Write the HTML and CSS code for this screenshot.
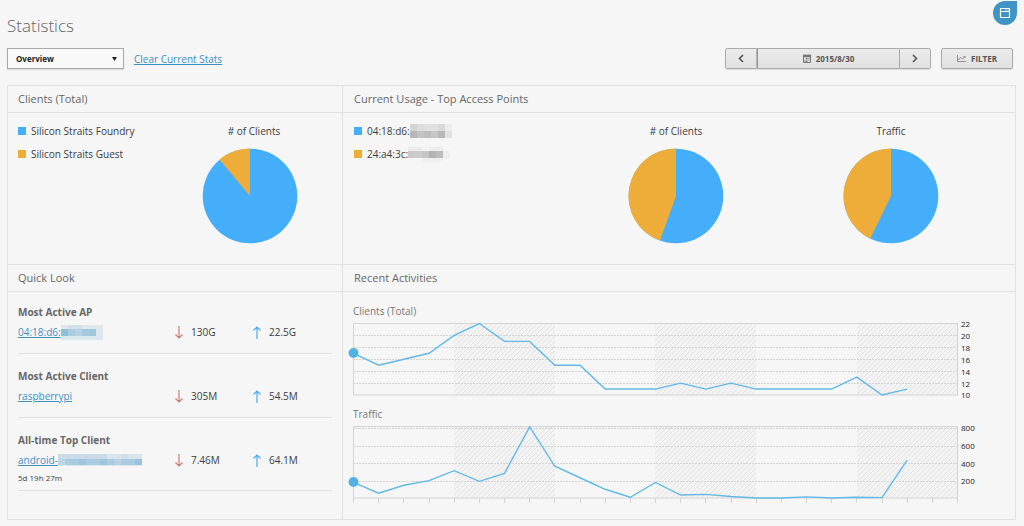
FILE: index.html
```html
<!DOCTYPE html>
<html lang="en">
<head>
<meta charset="utf-8">
<meta name="viewport" content="width=device-width, initial-scale=1">
<title>Statistics</title>
<link rel="stylesheet" href="styles.css">
</head>
<body>
<button class="corner-button" type="button" aria-label="Open window">
  <svg width="12" height="12" viewBox="0 0 12 12" fill="none" stroke="#fff" stroke-width="1.200"><rect x="1.500" y="1.500" width="9" height="9" rx=".5"/><path d="M1.500 4.500H10.500M6.500 3h1M8.500 3h1"/></svg>
</button>
<main class="page">
  <h1 class="title">Statistics</h1>
  <div class="toolbar">
    <div class="picker">
      <select class="picker-select" aria-label="View"><option>Overview</option></select>
      <svg class="picker-caret" width="5" height="4" viewBox="0 0 5 4"><path d="M0 0h5L2.500 4z" fill="#222"/></svg>
    </div>
    <a class="clear-link" href="#">Clear Current Stats</a>
    <div class="date-group">
      <button class="btn btn-step" type="button" aria-label="Previous day"><svg width="6" height="9" viewBox="0 0 6 9"><path d="M5 1L1.500 4.500L5 8" fill="none" stroke="#555" stroke-width="1.600"/></svg></button>
      <button class="btn btn-date" type="button"><svg width="8" height="9" viewBox="0 0 8 9"><path d="M.5 1.500h7v7h-7z" fill="none" stroke="#777"/><path d="M0 1h8v2H0zM2 0v1M6 0v1" fill="#777" stroke="#777" stroke-width=".5"/><path d="M3 4.500h3.500M1.500 6h5M1.500 7.500h3.500" stroke="#777" stroke-dasharray="1 .5"/></svg>2015/8/30</button>
      <button class="btn btn-step" type="button" aria-label="Next day"><svg width="6" height="9" viewBox="0 0 6 9"><path d="M1 1L4.500 4.500L1 8" fill="none" stroke="#555" stroke-width="1.600"/></svg></button>
    </div>
    <button class="btn btn-filter" type="button"><svg width="9" height="7" viewBox="0 0 9 7"><path d="M.5 0v6.500H9M1.500 5L3.500 2.500L5.500 4L8 1.500M6.500 1.500H8V3" fill="none" stroke="#777" stroke-width=".8"/></svg>FILTER</button>
  </div>

  <div class="board">
    <section class="panel">
      <h2 class="panel-title">Clients (Total)</h2>
      <div class="usage">
        <ul class="legend">
          <li><span class="swatch blue"></span>Silicon Straits Foundry</li>
          <li><span class="swatch orange"></span>Silicon Straits Guest</li>
        </ul>
        <figure class="pie pie-single"><figcaption>#&nbsp;of Clients</figcaption>
          <svg width="96" height="96" viewBox="-48 -48 96 96"><circle r="47.300" fill="#44aefa"/><path d="M0 0V-47.600A47.600 47.600 0 0 0 -30.600 -36.500z" fill="#eead39"/></svg></figure>
      </div>
    </section>

    <section class="panel panel-main">
      <h2 class="panel-title">Current Usage - Top Access Points</h2>
      <div class="usage">
        <ul class="legend">
          <li><span class="swatch blue"></span>04:18:d6:<svg class="masked" width="42" height="15" shape-rendering="crispEdges"><path d="M0 0h7v7H0z" fill="#d5d5d5"/><path d="M7 0h7v7H7z" fill="#dcdcdc"/><path d="M14 0h14v7H14z" fill="#e0e1e0"/><path d="M28 0h7v7h-7z" fill="#dadada"/><path d="M35 0h7v7h-7z" fill="#eeeeee"/><path d="M0 7h7v7H0z" fill="#b9b7b8"/><path d="M7 7h7v7H7z" fill="#c4c4c4"/><path d="M14 7h7v7h-7z" fill="#bebebe"/><path d="M21 7h7v7h-7z" fill="#c7c7c7"/><path d="M28 7h7v7h-7z" fill="#b9b9ba"/><path d="M35 7h7v7h-7z" fill="#e2e2e3"/></svg></li>
          <li><span class="swatch orange"></span>24:a4:3c:<svg class="masked" width="42" height="15" shape-rendering="crispEdges"><path d="M0 0h14v4H0z" fill="#ececec"/><path d="M14 0h7v4h-7z" fill="#f3f3f3"/><path d="M21 0h14v4H21z" fill="#ededed"/><path d="M0 4h7v7H0z" fill="#c9c9c9"/><path d="M7 4h7v7H7z" fill="#cccccc"/><path d="M14 4h7v7h-7z" fill="#c5c5c5"/><path d="M21 4h7v7h-7z" fill="#b4b4b4"/><path d="M28 4h7v7h-7z" fill="#bdbdbd"/><path d="M35 4h7v7h-7z" fill="#eeeeee"/><path d="M14 11h21v4H14z" fill="#f0f0f0"/></svg></li>
        </ul>
        <figure class="pie"><figcaption>#&nbsp;of Clients</figcaption>
          <svg width="96" height="96" viewBox="-48 -48 96 96"><circle r="47.300" fill="#44aefa"/><path d="M0 0V-47.600A47.600 47.600 0 0 0 -16 44.800z" fill="#eead39"/></svg></figure>
        <figure class="pie pie-wide"><figcaption>Traffic</figcaption>
          <svg width="96" height="96" viewBox="-48 -48 96 96"><circle r="47.300" fill="#44aefa"/><path d="M0 0V-47.600A47.600 47.600 0 0 0 -20.800 42.800z" fill="#eead39"/></svg></figure>
      </div>
    </section>

    <section class="panel">
      <h2 class="panel-title">Quick Look</h2>
      <div class="looks">
        <article class="look">
          <h3>Most Active AP</h3>
          <div class="look-row">
            <div class="who"><a href="#">04:18:d6:</a><svg class="masked" width="42" height="15" shape-rendering="crispEdges"><path d="M0 0h42v4H0z" fill="#dfe7ec"/><path d="M7 0h14v4H7z" fill="#d3e1e9"/><path d="M0 4h7v7H0z" fill="#91bfd9"/><path d="M7 4h7v7H7z" fill="#a9cce0"/><path d="M14 4h7v7h-7z" fill="#b5d2e2"/><path d="M21 4h7v7h-7z" fill="#a5cadf"/><path d="M28 4h7v7h-7z" fill="#a0c7df"/><path d="M35 4h7v7h-7z" fill="#dce7ee"/><path d="M0 11h42v4H0z" fill="#dce8ef"/></svg></div>
            <span class="stat"><svg width="8" height="13" viewBox="0 0 8 13"><path d="M4 0v12M.5 8.500L4 12L7.500 8.500" fill="none" stroke="#cb7b70" stroke-width="1.200"/></svg>130G</span>
            <span class="stat"><svg width="8" height="13" viewBox="0 0 8 13"><path d="M4 13V1M.5 4.500L4 1L7.500 4.500" fill="none" stroke="#45aef5" stroke-width="1.200"/></svg>22.5G</span>
          </div>
        </article>
        <article class="look">
          <h3>Most Active Client</h3>
          <div class="look-row">
            <div class="who"><a href="#">raspberrypi</a></div>
            <span class="stat"><svg width="8" height="13" viewBox="0 0 8 13"><path d="M4 0v12M.5 8.500L4 12L7.500 8.500" fill="none" stroke="#cb7b70" stroke-width="1.200"/></svg>305M</span>
            <span class="stat"><svg width="8" height="13" viewBox="0 0 8 13"><path d="M4 13V1M.5 4.500L4 1L7.500 4.500" fill="none" stroke="#45aef5" stroke-width="1.200"/></svg>54.5M</span>
          </div>
        </article>
        <article class="look">
          <h3>All-time Top Client</h3>
          <div class="look-row">
            <div class="who"><a href="#">android-</a><svg class="masked" width="84" height="12" shape-rendering="crispEdges"><path d="M0 0h84v5H0z" fill="#d8e5ec"/><path d="M0 0h49v5H0z" fill="#c9dce7"/><path d="M63 0h7v5h-7z" fill="#cfdfe8"/><path d="M0 5h84v6H0z" fill="#a9cce0"/><path d="M0 5h7v6H0z" fill="#bdd7e5"/><path d="M21 5h7v6h-7zM42 5h7v6h-7z" fill="#9fc6dd"/><path d="M56 5h7v6h-7z" fill="#b7d3e4"/><path d="M77 5h7v6h-7z" fill="#9ac4df"/><path d="M0 11h84v1H0z" fill="#dbe8ef"/></svg></div>
            <span class="stat"><svg width="8" height="13" viewBox="0 0 8 13"><path d="M4 0v12M.5 8.500L4 12L7.500 8.500" fill="none" stroke="#cb7b70" stroke-width="1.200"/></svg>7.46M</span>
            <span class="stat"><svg width="8" height="13" viewBox="0 0 8 13"><path d="M4 13V1M.5 4.500L4 1L7.500 4.500" fill="none" stroke="#45aef5" stroke-width="1.200"/></svg>64.1M</span>
          </div>
          <p class="uptime">5d 19h 27m</p>
        </article>
      </div>
    </section>

    <section class="panel panel-main">
      <h2 class="panel-title">Recent Activities</h2>
      <div class="activity">
        <h3>Clients (Total)</h3>
        <svg class="chart" viewBox="0 0 652 84" role="img" aria-label="Clients over the day">
          <defs><pattern id="hatch" width="5" height="5" patternUnits="userSpaceOnUse"><rect width="5" height="5" fill="#f3f3f3"/><path d="M-1 1L1 -1M0 5L5 0M4 6L6 4" stroke="#dfdfdf" stroke-width=".8"/></pattern></defs>
          <path d="M101 5h101v72H101zM302 5h101v72H302zM504 5h101v72H504z" fill="url(#hatch)"/>
          <path class="grid" d="M0 17.500H605M0 29.500H605M0 41.500H605M0 53.500H605M0 65.500H605"/>
          <rect class="frame" x=".5" y="5.500" width="604" height="71.500"/>
          <polyline class="line" points=""/>
          <circle class="dot" cx=".5" cy="35"/>
          <g class="ticks"><text x="608" y="9">22</text><text x="608" y="21">20</text><text x="608" y="33">18</text><text x="608" y="45">16</text><text x="608" y="57">14</text><text x="608" y="69">12</text><text x="608" y="80">10</text></g>
        </svg>
        <h3>Traffic</h3>
        <svg class="chart" viewBox="0 0 652 84" role="img" aria-label="Traffic over the day">
          <path d="M101 5h101v72H101zM302 5h101v72H302zM504 5h101v72H504z" fill="url(#hatch)"/>
          <path class="grid" d="M0 7.500H605M0 25.500H605M0 42.500H605M0 60.500H605"/>
          <rect class="frame" x=".5" y="5.500" width="604" height="71.500"/>
          <path class="marks" d=""/>
          <polyline class="line" points=""/>
          <circle class="dot" cx=".5" cy="61"/>
          <g class="ticks"><text x="608" y="10">800</text><text x="608" y="28">600</text><text x="608" y="46">400</text><text x="608" y="63">200</text></g>
        </svg>
      </div>
    </section>
  </div>
</main>
<script src="charts.js"></script>
</body>
</html>
```
FILE: styles.css
```css
* { box-sizing: border-box; }
body { margin: 0; background: #f6f6f6; color: #3c3c3c; font: 10px/14px "Open Sans", "Noto Sans", sans-serif; }
h1, h2, h3, p, ul, figure { margin: 0; padding: 0; font-weight: 400; }
svg { display: block; flex: none; }
a { color: #3d8fc4; }
button { font: inherit; padding: 0; cursor: pointer; }

.corner-button { position: absolute; top: 1px; right: 7px; width: 24px; height: 24px; display: flex; align-items: center; justify-content: center; border: 0; border-radius: 12px 0 12px 12px; background: #4094c4; }

.page { padding: 14px 8px 6px 7px; }
.title { font-size: 17px; line-height: 24px; font-weight: 300; color: #666; }

.toolbar { display: flex; align-items: center; margin-top: 10px; height: 21px; }
.picker { display: grid; align-items: center; width: 117px; }
.picker-select { grid-area: 1 / 1; height: 21px; padding: 0 8px; border: 1px solid #aaa; border-radius: 0; appearance: none; background: #f9f9f9; box-shadow: 0 1px 1px #ddd; color: #222; font: 700 8px/14px "Open Sans", sans-serif; }
.picker-caret { grid-area: 1 / 1; justify-self: end; margin-right: 7px; pointer-events: none; }
.clear-link { margin-left: 10px; font-size: 10px; }
.date-group { display: flex; margin-left: auto; }
.btn { display: flex; align-items: center; justify-content: center; gap: 5px; height: 21px; border: 1px solid #aaa; background: linear-gradient(#ebebeb, #e1e1e1); box-shadow: 0 1px 1px #ddd; color: #555; font-weight: 700; font-size: 8px; }
.btn-step { width: 32px; border-radius: 2px 0 0 2px; }
.btn-date { width: 142px; border-left-color: #999; border-right: 0; }
.btn-date + .btn-step { border-radius: 0 2px 2px 0; }
.btn-filter { width: 72px; margin: 0 3px 0 10px; border-radius: 2px; }

.board { display: grid; grid-template-columns: 335px 1fr; grid-template-rows: 178px auto; margin-top: 16px; border: 1px solid #e2e2e2; border-width: 1px 1px 1px 0; }
.panel { border-left: 1px solid #e2e2e2; }
.panel:nth-child(n+3) { border-top: 1px solid #e2e2e2; }
.panel-title { padding: 0 10px; height: 27px; border-bottom: 1px solid #e2e2e2; font-size: 11px; line-height: 26px; color: #666; }
.panel-main .panel-title { padding-left: 11px; }

.usage { display: flex; padding: 10px 42px 0 10px; }
.panel-main .usage { padding: 10px 74px 0 11px; }
.legend { list-style: none; flex: 1; }
.legend li { display: flex; align-items: center; height: 16px; margin-bottom: 7px; }
.swatch { width: 8px; height: 8px; margin-right: 5px; }
.blue { background: #44aefa; }
.orange { background: #eead39; }
.pie { display: grid; justify-items: center; align-content: start; gap: 9px; width: 100px; line-height: 16px; }
.pie-single figcaption { padding-left: 8px; }
.pie-wide { margin-left: 115px; }

.looks { padding: 0 10px; }
.look { padding: 12px 0; border-bottom: 1px solid #e2e2e2; line-height: 16px; }
.look + .look { padding-top: 14px; }
.look:last-child { padding-bottom: 5px; }
.look h3 { font-size: 10px; font-weight: 700; color: #666; }
.look-row { display: grid; grid-template-columns: 1fr 78px 79px; align-items: center; height: 18px; margin-top: 3px; }
.who { display: flex; align-items: center; }
.stat { display: flex; align-items: center; gap: 8px; }
.uptime { margin-top: 2px; font-size: 8px; line-height: 14px; }

.activity { padding: 12px 10px 14px; }
.activity h3 { font-size: 10px; line-height: 14px; color: #777; }
.chart { width: 100%; overflow: visible; margin-bottom: 5px; }
.chart:last-child { margin-bottom: 0; }
.grid { stroke: #d4d4d4; stroke-dasharray: 2 1; }
.frame { fill: none; stroke: #d4d4d4; }
.marks { stroke: #d4d4d4; }
.line { fill: none; stroke: #62b9e8; stroke-width: 1.4; }
.dot { r: 5px; fill: #53b2e4; }
.ticks { font-size: 8px; fill: #222; }
```
FILE: charts.js
```js
const STEP = 604 / 24;
const clients = [17, 15, 16, 17, 20, 22, 19, 19, 15, 15, 11, 11, 11, 12, 11, 12, 11, 11, 11, 11, 13, 10, 11];
const traffic = [187, 65, 155, 208, 320, 200, 290, 815, 370, 240, 110, 20, 187, 45, 52, 28, 12, 12, 24, 12, 20, 16, 440];

const toPoints = (values, y) => values.map((v, i) => `${0.5 + i * STEP},${y(v)}`).join(" ");
const lines = document.querySelectorAll(".line");
lines[0].setAttribute("points", toPoints(clients, v => 5.5 + (22 - v) * 5.96));
lines[1].setAttribute("points", toPoints(traffic, v => 78 - v * 0.0885));

let marks = "";
for (let i = 0; i <= 24; i++) marks += `M${Math.round(i * STEP) + 0.5} 77v5`;
document.querySelector(".marks").setAttribute("d", marks);
```
